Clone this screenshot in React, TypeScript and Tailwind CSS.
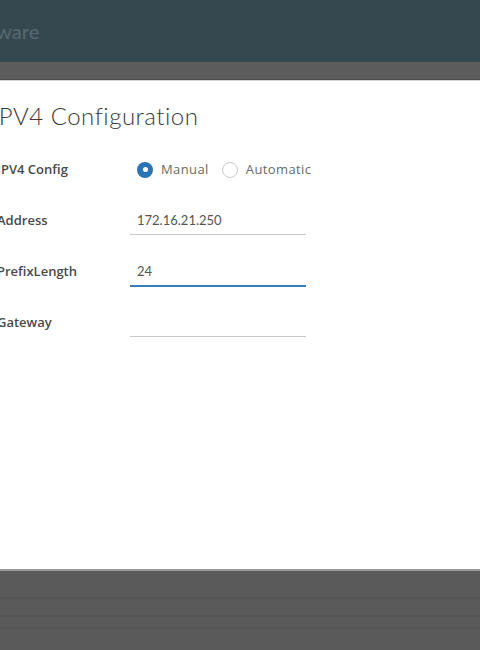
import React from 'react'

const sans = { fontFamily: '"Open Sans", Lato, sans-serif' }

function Radio({ checked, label }: { checked: boolean; label: string }) {
  return (
    <label className="flex items-center gap-2">
      {checked ? (
        <span className="w-4 h-4 rounded-full bg-[#2a73b5] flex items-center justify-center">
          <span className="w-[5px] h-[5px] rounded-full bg-white" />
        </span>
      ) : (
        <span className="w-4 h-4 rounded-full border border-[#c8c8c8] bg-white" />
      )}
      <span className="text-[13px] text-[#6a6a6a] tracking-[0.4px]" style={sans}>{label}</span>
    </label>
  )
}

function Field({ label, value, active }: { label: string; value?: string; active?: boolean }) {
  return (
    <div className="flex items-center h-[51px]">
      <div className="w-[133px] -ml-[3px] text-[13px] font-semibold text-[#4a4a4a]" style={sans}>{label}</div>
      <div className={`w-[176px] h-[28px] flex items-center px-[7px] text-[13px] text-[#555] ${active ? 'border-b-2 border-[#3a7dbb] mt-[2px]' : 'border-b border-[#c9c9c9] mt-[1px]'}`}>
        {value}
      </div>
    </div>
  )
}

export default function App() {
  return (
    <div className="w-[480px] h-[650px] flex flex-col bg-[#5b5b5b] overflow-hidden" style={{ fontFamily: 'Lato, "Open Sans", sans-serif' }}>
      <header className="h-[62px] bg-[#35474f] flex items-center shrink-0">
        <span className="-ml-[4px] text-[20px] font-semibold text-[#54656d]">ware</span>
      </header>
      <div className="h-[18px] bg-[#5c5c5c] shrink-0 border-b border-[#4c4c4c]" />
      <div className="h-[489px] bg-white shrink-0 border-t border-[#d4d4d4] flex flex-col">
        <h1 className="mt-[17px] -ml-[8px] text-[24px] font-light text-[#3a3a3a] tracking-[0.5px]">IPV4 Configuration</h1>
        <div className="mt-[10px] flex flex-col">
          <div className="flex items-center h-[51px]">
            <div className="w-[140px] -ml-[3px] text-[13px] font-semibold text-[#4a4a4a]" style={sans}>IPV4 Config</div>
            <div className="flex items-center gap-[13px]">
              <Radio checked label="Manual" />
              <Radio checked={false} label="Automatic" />
            </div>
          </div>
          <Field label="Address" value="172.16.21.250" />
          <Field label="PrefixLength" value="24" active />
          <Field label="Gateway" />
        </div>
      </div>
      <div className="flex-1 bg-[#5a5a5a] border-t-2 border-[#9a9a9a] flex flex-col">
        <div className="h-[26px]" />
        <div className="h-[2px] bg-[#555]" />
        <div className="h-[16px]" />
        <div className="h-[2px] bg-[#555]" />
        <div className="h-[10px]" />
        <div className="h-[2px] bg-[#555]" />
      </div>
    </div>
  )
}
